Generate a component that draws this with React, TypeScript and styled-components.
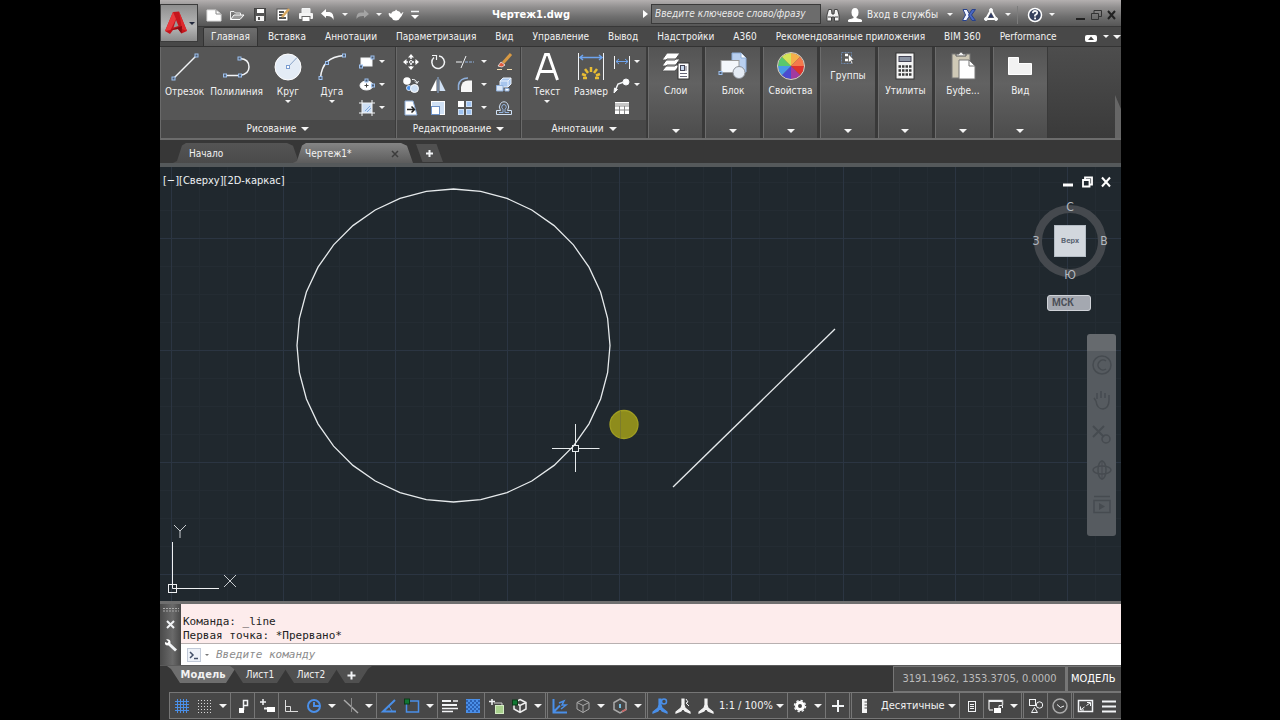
import React from 'react';
import styled, { createGlobalStyle, css } from 'styled-components';

const GlobalStyle = createGlobalStyle`
  *, *::before, *::after { box-sizing: border-box; }
  body {
    margin: 0;
    background: #000;
    color: #f2f2f2;
    font: 10px/14px "DejaVu Sans Condensed", "DejaVu Sans", sans-serif;
    overflow: hidden;
  }
  button, input, select {
    font: inherit;
    color: inherit;
    background: none;
    border: 0;
    padding: 0;
    margin: 0;
    border-radius: 0;
  }
  button { cursor: pointer; white-space: nowrap; }
  svg { display: block; flex: none; }
`;

/* ---------- shell ---------- */

const Page = styled.div`
  padding-left: 12.5%;
  background: #000;
`;

const Window = styled.div`
  display: flex;
  flex-direction: column;
  width: calc(75vw + 1px);
  height: 100vh;
  overflow: hidden;
  background: #373737;
`;

const Spacer = styled.div`
  flex: 1;
`;

const Caret = styled.span<{ $size?: number }>`
  flex: none;
  width: 0;
  height: 0;
  border: ${p => p.$size ?? 3}px solid transparent;
  border-top-color: #f4f4f4;
  border-bottom-width: 0;
`;

const CaretButton = styled.button<{ $w?: number }>`
  flex: none;
  display: flex;
  align-items: center;
  justify-content: center;
  width: ${p => p.$w ?? 12}px;
`;

/* ---------- header ---------- */

const Header = styled.header`
  flex: none;
  display: grid;
  grid-template-columns: 40px minmax(0, 1fr);
  height: 46px;
  background: linear-gradient(#b4b0b0 0, #929090 7px, #6e6e6e 17px, #565656 26px, #383838 26px, #383838 27px, #484848 27px);
`;

const AppButton = styled.button`
  display: flex;
  align-items: center;
  justify-content: center;
  gap: 1px;
  width: 38px;
  height: 38px;
  margin: 4px 0 0 0;
  border: 1px solid #3c3c3c;
  background: linear-gradient(#8e8e8e, #b8b8b8 60%, #8c8c8c);
  ${Caret} { border-top-color: #22283c; }
`;

const HeaderRows = styled.div`
  display: flex;
  flex-direction: column;
`;

const TitleBar = styled.div`
  display: flex;
  align-items: center;
  height: 27px;
`;

const ToolButton = styled.button<{ $w?: number }>`
  flex: none;
  display: flex;
  align-items: center;
  justify-content: center;
  width: ${p => p.$w ?? 23}px;
  height: 23px;
`;

const QuickTools = styled.div`
  display: flex;
  align-items: center;
  padding: 2px 0 0 2px;
`;

const DocTitle = styled.h1`
  flex: 1;
  margin: 0;
  padding: 3px 0 0 0;
  text-align: center;
  font-size: 11px;
  font-weight: bold;
  line-height: 14px;
  color: #fff;
`;

const Search = styled.input`
  flex: none;
  width: 170px;
  height: 20px;
  padding: 0 3px;
  border: 1px solid #3a3a3a;
  background: #6c6c6c;
  font-style: italic;
  &::placeholder { color: #eaeaea; opacity: 1; }
`;

const SignIn = styled.button`
  flex: none;
  display: flex;
  align-items: center;
  gap: 5px;
  width: 96px;
  padding-left: 4px;
`;

const VRule = styled.span`
  width: 1px;
  height: 18px;
  margin: 0 5px;
  background: #7c7c7c;
`;

const AccountTools = styled.div`
  flex: none;
  display: flex;
  align-items: center;
  width: 300px;
  padding: 2px 2px 0 0;
`;

const RibbonTabs = styled.nav`
  display: flex;
  align-items: stretch;
  gap: 1px;
  height: 19px;
  padding-left: 3px;
`;

const RibbonTab = styled.button<{ $active?: boolean }>`
  flex: none;
  padding: 1px 9px 0;
  ${p => p.$active && css`
    padding: 0 7px;
    border: 1px solid #333;
    border-bottom: 0;
    border-radius: 2px 2px 0 0;
    background: linear-gradient(#6e6e6e, #585858);
  `}
`;

/* ---------- ribbon ---------- */

const Ribbon = styled.section`
  flex: none;
  display: flex;
  height: 94px;
  border-top: 1px solid #333;
  border-bottom: 2px solid #6c6c6c;
  background: linear-gradient(#4d4d4d, #3a3a3a);
`;

const Panel = styled.div<{ $w: number }>`
  flex: none;
  display: flex;
  flex-direction: column;
  width: ${p => p.$w}px;
  border-left: 1px solid #6a6a6a;
  border-right: 1px solid #3c3c3c;
  background: #565656;
`;

const PanelBody = styled.div<{ $pad?: number }>`
  flex: 1;
  display: flex;
  padding: 3px 0 0 ${p => p.$pad ?? 1}px;
`;

const PanelLabel = styled.button`
  display: flex;
  align-items: center;
  justify-content: center;
  gap: 5px;
  height: 18px;
  background: #484848;
`;

const BigTool = styled.button`
  flex: none;
  display: flex;
  flex-direction: column;
  align-items: center;
  min-width: 44px;
  height: 58px;
  padding: 2px 3px 0;
  svg { margin-bottom: 3px; }
  ${Caret} { margin-top: 1px; }
`;

const SmallGrid = styled.div<{ $cols: string; $push?: boolean }>`
  display: grid;
  grid-template-columns: ${p => p.$cols};
  grid-auto-rows: 23px;
  align-content: start;
  margin: ${p => (p.$push ? '0 5px 0 auto' : '0')};
`;

const SmallTool = styled.span`
  display: flex;
  align-items: center;
`;

const SmallButton = styled.button<{ $w: number }>`
  flex: none;
  display: flex;
  justify-content: center;
  width: ${p => p.$w}px;
`;

const Collapsed = styled.div`
  flex: none;
  display: grid;
  grid-template-columns: repeat(7, 1fr);
  gap: 3px;
  width: 401px;
  padding: 0 1px;
  background: #393939;
`;

const CollapsedPanel = styled.button`
  display: flex;
  flex-direction: column;
  align-items: center;
  padding: 4px 0 5px;
  border-left: 1px solid #6c6c6c;
  background: linear-gradient(#545454, #626262 40%, #4c4c4c);
  span:last-child { margin-top: auto; }
`;

const CollapsedText = styled.span`
  padding-top: 3px;
`;

const RibbonEdge = styled.div`
  align-self: flex-end;
  width: 6px;
  height: 43px;
  background: #666;
  clip-path: polygon(0 0, 100% 14px, 100% 100%, 0 100%);
`;

/* ---------- document tabs ---------- */

const FileTabs = styled.nav`
  flex: none;
  display: flex;
  align-items: flex-end;
  height: 27px;
  padding: 0 0 0 13px;
  border-bottom: 4px solid #55595b;
`;

const FileTab = styled.button<{ $w: number; $active?: boolean }>`
  display: flex;
  align-items: center;
  justify-content: space-between;
  width: ${p => p.$w}px;
  height: 20px;
  margin-right: -6px;
  padding: 2px 14px 0 16px;
  background: ${p => (p.$active ? 'linear-gradient(#858585, #5c5c5c)' : 'linear-gradient(#545454, #4a4a4a)')};
  clip-path: polygon(0 100%, 4px 90%, 9px 12%, 13px 0, calc(100% - 12px) 0, calc(100% - 6px) 14%, 100% 100%);
  & + & { padding-left: 12px; }
`;

const NewFileTab = styled.button`
  display: flex;
  align-items: center;
  justify-content: center;
  width: 27px;
  height: 18px;
  margin: 0 0 1px 9px;
  background: #505050;
  clip-path: polygon(0 0, 76% 0, 100% 100%, 24% 100%);
`;

/* ---------- drawing area ---------- */

const Canvas = styled.main`
  position: relative;
  flex: 1;
  min-height: 0;
  overflow: hidden;
  background-color: #20282e;
  background-image:
    linear-gradient(90deg, #2b3542 1px, transparent 1px),
    linear-gradient(#2b3542 1px, transparent 1px),
    repeating-linear-gradient(90deg, #242c33 0 1px, transparent 1px 28px),
    repeating-linear-gradient(#242c33 0 1px, transparent 1px 28px);
  background-size: 112px 100%, 100% 112px, 112px 100%, 100% 112px;
  background-position: 11px 0, 0 71px, 11px 0, 0 71px;
`;

const Drawing = styled.svg`
  position: absolute;
  inset: 0;
  width: 100%;
  height: 100%;
`;

const ViewLabels = styled.div`
  position: absolute;
  top: 7px;
  left: 3px;
  display: flex;
  font-size: 11px;
  color: #eef1f3;
`;

const ViewControls = styled.div`
  position: absolute;
  top: 8px;
  right: 8px;
  display: flex;
  gap: 5px;
`;

const UcsIcon = styled.svg`
  position: absolute;
  left: 6px;
  bottom: 7px;
`;

const ViewCube = styled.div`
  position: absolute;
  top: 33px;
  right: 7px;
  display: grid;
  grid-template-columns: 20px 48px 20px;
  grid-template-rows: 14px 54px 14px;
  place-items: center;
  font-size: 12px;
  color: #b4bac0;
  &::before {
    content: "";
    position: absolute;
    top: 5px;
    left: 8px;
    width: 72px;
    height: 72px;
    border: 8px solid #45494e;
    border-radius: 50%;
  }
`;

const Compass = styled.button<{ $area: string }>`
  position: relative;
  grid-area: ${p => p.$area};
`;

const CubeFace = styled.button`
  grid-area: 2 / 2;
  position: relative;
  width: 32px;
  height: 32px;
  border: 1px solid #b4bcc4;
  background: #d2d7dd;
  color: #5b6673;
  font-family: Roboto, sans-serif;
  font-size: 8px;
  font-weight: bold;
`;

const UcsMenu = styled.button`
  position: absolute;
  top: 128px;
  right: 30px;
  width: 44px;
  height: 16px;
  padding: 0 4px;
  border: 1px solid #d0d3d8;
  border-radius: 3px;
  background: #a4a8b0;
  color: #4c5058;
  font-family: Roboto, sans-serif;
  font-weight: bold;
  line-height: 12px;
  text-align: left;
`;

const NavBar = styled.div`
  position: absolute;
  top: 167px;
  right: 5px;
  display: flex;
  flex-direction: column;
  align-items: center;
  gap: 13px;
  width: 29px;
  height: 202px;
  padding-top: 20px;
  border-radius: 3px;
  background: linear-gradient(#666a6e 0, #666a6e 17px, #565b60 17px);
`;

/* ---------- command line ---------- */

const CommandLine = styled.section`
  flex: none;
  display: grid;
  grid-template-columns: 21px minmax(0, 1fr);
  height: 64px;
  border-top: 3px solid #6f6f6f;
  font-family: "DejaVu Sans Mono", monospace;
  font-size: 11px;
`;

const Grip = styled.div`
  display: flex;
  flex-direction: column;
  align-items: center;
  gap: 8px;
  padding-top: 3px;
  background: linear-gradient(90deg, #4a4a4a, #6a6a6a 60%, #484848);
`;

const History = styled.pre`
  height: 40px;
  margin: 0;
  padding: 11px 2px 0;
  background: #fdecec;
  color: #222;
  font: inherit;
  line-height: 14px;
  border-bottom: 1px solid #b8b0b0;
`;

const Prompt = styled.label`
  display: flex;
  align-items: center;
  gap: 4px;
  height: 21px;
  padding-left: 6px;
  background: #fff;
  ${Caret} { border-top-color: #777; }
`;

const PromptInput = styled.input`
  flex: 1;
  padding-left: 3px;
  outline: 0;
  color: #333;
  font-style: italic;
  &::placeholder { color: #8c8c8c; opacity: 1; }
`;

/* ---------- bottom bars ---------- */

const LayoutRow = styled.div`
  flex: none;
  display: flex;
  height: 27px;
  padding-left: 7px;
  border-top: 1px solid #5a5a5a;
`;

const LayoutTab = styled.button<{ $w: number; $active?: boolean }>`
  flex: none;
  width: ${p => p.$w}px;
  height: 17px;
  margin-right: -9px;
  font-size: ${p => (p.$active ? 11 : 10)}px;
  font-weight: ${p => (p.$active ? 'bold' : 'normal')};
  background: ${p => (p.$active ? '#6e6e6e' : '#505050')};
  clip-path: polygon(0 0, 100% 0, calc(100% - 4px) 18%, calc(100% - 13px) 100%, 13px 100%, 4px 18%);
`;

const Readout = styled.button<{ $dim?: boolean }>`
  flex: none;
  width: 173px;
  height: 26px;
  padding: 0 6px;
  border: 1px solid #767676;
  background: #4a4a4a;
  color: ${p => (p.$dim ? '#bcbcbc' : '#fff')};
  font-size: 11px;
  & + & { width: 55px; padding: 0 0 0 3px; text-align: left; border-left-width: 2px; border-right: 0; }
`;

const StatusBar = styled.footer`
  flex: none;
  display: flex;
  align-items: stretch;
  height: 27px;
  margin: 0 0 1px 9px;
  border: 1px solid #767676;
  border-right: 0;
  background: #474747;
  font-size: 11px;
`;

const StatusButton = styled.button`
  flex: none;
  display: flex;
  align-items: center;
  justify-content: center;
  width: 23px;
`;

const Divider = styled.span<{ $double?: boolean }>`
  flex: none;
  width: ${p => (p.$double ? 3 : 1)}px;
  border: solid #767676;
  border-width: 0 ${p => (p.$double ? 1 : 0)}px 0 1px;
`;

const Picker = styled.select<{ $pad: number }>`
  flex: none;
  appearance: none;
  padding: 0 0 0 ${p => p.$pad}px;
  color: #f2f2f2;
`;

/* ---------- icons ---------- */

const BLUE = '#4a8fe8';
const PALE = '#cfe0f4';
const EDGE = '#8fb0dc';

type IconProps = { s?: number; w?: number; h?: number; children: React.ReactNode };
const Icon = ({ s = 18, w, h, children }: IconProps) => (
  <svg
    width={w ?? s}
    height={h ?? s}
    viewBox={`0 0 ${w ?? s} ${h ?? s}`}
    fill="none"
    stroke="#f2f4f6"
    strokeWidth={1}
    aria-hidden="true"
  >
    {children}
  </svg>
);

const Node = ({ x, y }: { x: number; y: number }) => (
  <rect x={x - 1.5} y={y - 1.5} width={3} height={3} fill="#4e5c70" stroke="#9cc0ee" />
);

const Logo = () => (
  <Icon w={24} h={26}>
    <path d="M9 2 L15 1.500 L23 21 L17.500 23.500 L14 19 L9 20 L6 24 L1 21Z" fill="#c4151c" stroke="none" />
    <path d="M9 2 L12 9 L6.500 20 L1 21Z" fill="#e8393c" stroke="none" />
    <path d="M12 10 L14.500 16 L9.500 17.500Z" fill="#9a9a9a" stroke="none" />
    <path d="M15 1.500 L23 21 L18 19Z" fill="#dd2a2e" stroke="none" />
    <path d="M6.500 20 L18 16 L17.500 23.500 L14 19Z" fill="#8c0c12" stroke="none" />
  </Icon>
);

const quick = {
  fresh: <Icon s={16}><path d="M1 3H10L15 7V14H1Z" fill="#fff" stroke="#ddd" /><path d="M10 3V7H15" stroke="#888" /></Icon>,
  open: <Icon s={16}><path d="M1.500 12.500V4.500H5L6.500 6H11.500V8" stroke="#eee" /><path d="M1.500 12.500L5 8H15L11 12.500Z" fill="#999" stroke="#fff" /></Icon>,
  save: <Icon s={16}><rect x="2.500" y="1.500" width="11" height="12" fill="#555" stroke="#444" /><rect x="5" y="2" width="7" height="4" fill="#fff" stroke="none" /><rect x="4" y="9" width="8" height="5" fill="#f4f4f4" stroke="none" /><rect x="6" y="10" width="2" height="3" fill="#555" stroke="none" /></Icon>,
  saveAs: <Icon s={16}><rect x="2" y="2" width="11" height="12" fill="#fff" stroke="#555" /><path d="M4 5H9M4 8H8M4 11H11" stroke="#555" strokeWidth="2" /><path d="M7 10L14 2" stroke="#d8a860" strokeWidth="2.500" /></Icon>,
  print: <Icon s={16}><path d="M4 6V1.500H12V6" fill="#eee" /><rect x="1" y="6" width="14" height="6" rx="1" fill="#f4f4f4" stroke="none" /><rect x="4" y="9.500" width="8" height="5" fill="#fff" stroke="#666" /></Icon>,
  undo: <Icon s={16}><path d="M1 6.500L6 2V5H9.500Q14 5.500 13.500 13Q12 8.500 6 9V11Z" fill="#fff" stroke="none" /></Icon>,
  redo: <Icon s={16}><path d="M15 7L10 2.500V5.500H6.500Q2 6 2.500 12Q4 8.500 10 9V11Z" fill="#a4a4a4" stroke="none" /></Icon>,
  teapot: <Icon s={16}><path d="M3 7Q4 4 7 4L8 2.500L9.500 4Q12 4 13 7Q14.500 5 15.500 5Q14 9 12 11Q11 13.500 8 13.500Q4.500 13.500 4 11Q1 10 .5 6.500Q2 5.500 3 7Z" fill="#fff" stroke="none" /></Icon>,
  more: <Icon s={16}><path d="M4 4.500H12" strokeWidth="1.500" /><path d="M4 8H12L8 12Z" fill="#fff" stroke="none" /></Icon>,
};

const account = {
  find: <Icon s={16}><path d="M2 14V8L3.500 2.500H6.500L7 7H9L9.500 2.500H12.500L14 8V14H9.500V10H6.500V14Z" fill="#f4f4f4" stroke="#444" /><path d="M3 10H6M10 10H13" stroke="#444" /></Icon>,
  user: <Icon w={14} h={14}><ellipse cx="7" cy="4.500" rx="3.500" ry="4.500" fill="#fff" stroke="none" /><path d="M6 8H8V10.500L13.500 12V13.500H.5V12L6 10.500Z" fill="#fff" stroke="#fff" /></Icon>,
  exchange: <Icon s={16}><path d="M2 2.500H6L9 8L5.500 13.500H1.500L4.500 8Z" fill="#f0f4ff" stroke="#27418c" /><path d="M14.500 2.500L10.500 8L14.500 13.500H11L7.500 8L11 2.500Z" fill="#4a68c4" stroke="#27418c" /></Icon>,
  a360: <Icon s={16}><path d="M8 3L13 12H3Z" stroke="#fff" strokeWidth="2" /><path d="M8 6L10.500 10.500H5.500Z" fill="#2c3a66" stroke="none" /><circle cx="8" cy="3" r="1.500" fill="#fff" /><circle cx="3" cy="12" r="1.500" fill="#fff" /><circle cx="13" cy="12" r="1.500" fill="#fff" /></Icon>,
  help: <Icon s={16}><circle cx="8" cy="8" r="6.500" fill="#34405c" stroke="#fff" strokeWidth="1.500" /><path d="M5.800 6.200Q6 4 8 4Q10.300 4 10.200 6Q10 7.300 8 8.300V9.500" strokeWidth="1.800" /><rect x="7.200" y="10.500" width="1.800" height="1.800" fill="#fff" stroke="none" /></Icon>,
};

const draw = {
  line: <Icon s={30}><path d="M3.500 26.500L26.500 3.500" strokeWidth="1.500" /><Node x={3.500} y={26.500} /><Node x={26.500} y={3.500} /></Icon>,
  poly: <Icon s={30}><path d="M3 23.500H18Q27 22 27 15Q27 7 18 6.500" strokeWidth="1.500" /><Node x={3} y={23.500} /><Node x={18} y={23.500} /><Node x={17.500} y={6.500} /></Icon>,
  circle: <Icon s={30}><circle cx="15" cy="15" r="13" fill="#e4ecf6" stroke="#fff" /><path d="M15 15L24 5.500" stroke="#8aa4c8" /><rect x="13.500" y="13.500" width="3" height="3" fill="#fff" stroke="#7a9cd0" /></Icon>,
  arc: <Icon s={30}><path d="M3.500 26Q5 5 27 3.500" strokeWidth="1.500" /><Node x={3.500} y={26} /><Node x={10} y={11} /><Node x={27} y={3.500} /></Icon>,
  rect: <Icon><rect x="3" y="5" width="11" height="8" fill="#fff" /><Node x={3} y={13.500} /><Node x={14.500} y={4.500} /></Icon>,
  ellipse: <Icon><ellipse cx="8.500" cy="9.500" rx="6.500" ry="4.500" fill="#fff" /><path d="M8.500 7.500V11.500M6.500 9.500H10.500" stroke="#444" /><Node x={8.500} y={4.500} /><Node x={15} y={9.500} /></Icon>,
  hatch: <Icon><rect x="4" y="4" width="10" height="10" fill={PALE} stroke="none" /><path d="M4 1V17M14 1V17M1 4H17M1 14H17" /><path d="M7 12L12 7M9 13L13 9" stroke="#7fa8de" /></Icon>,
};

const edit = {
  move: <Icon><path d="M9 1L12 4.500H6ZM9 17L6 13.500H12ZM1 9L4.500 6V12ZM17 9L13.500 12V6Z" fill="#fff" stroke="none" /><path d="M9 4V14M4 9H14" strokeWidth="1.500" strokeDasharray="2 1" /><circle cx="9" cy="9" r="1.500" fill="#565656" /></Icon>,
  rotate: <Icon><path d="M5 4.500A6.300 6.300 0 1 0 10 3" strokeWidth="1.500" /><path d="M3 2.500H7.500V7" strokeWidth="1.200" /></Icon>,
  trim: <Icon w={20} h={18}><path d="M1 9H7M6 15L11 3" /><path d="M10 9H19" stroke={EDGE} strokeDasharray="3 1" /></Icon>,
  erase: <Icon><path d="M8 10L16 1" stroke="#d89a44" strokeWidth="3" /><path d="M3 13L6 9L10 12L7 14Z" fill="#e05a3c" stroke="#fff" strokeWidth=".7" /><path d="M2 16.500H7M12 16.500H17" stroke="#f0dcb0" /></Icon>,
  copy: <Icon><circle cx="5" cy="5" r="3.800" fill="#fff" stroke="none" /><circle cx="7" cy="12" r="2.500" fill={BLUE} stroke={PALE} /><circle cx="12.500" cy="12.500" r="4" fill={PALE} stroke="#fff" /><path d="M10 3.500Q14 3 15 7M13 5.500L15 7.500L16.500 5" /></Icon>,
  mirror: <Icon><path d="M7.500 3V15H1.500Z" fill="#fff" stroke="none" /><path d="M10.500 3V15H16.500Z" fill={PALE} stroke="none" /><path d="M9 1V17" stroke={EDGE} /></Icon>,
  fillet: <Icon><path d="M5 16V11Q6 4.500 12 4.500H16V16Z" fill="#f6f6f6" stroke="none" /><path d="M2.500 14V9Q4 2 12 2" stroke={EDGE} strokeWidth="1.500" /></Icon>,
  explode: <Icon><path d="M5 5L8 2H16V8L13 11H5Z" fill="#a8c6ee" stroke="#eaf2fc" /><path d="M5 5H13V11M13 5L16 2" stroke="#eaf2fc" /><path d="M1.500 9.500H8V15H1.500Z" fill="#dbe8f8" stroke="#8fb0dc" /><path d="M10 12.500H14V15H10Z" fill="#fff" stroke="#8fb0dc" /></Icon>,
  stretch: <Icon><path d="M3 2H11L15 16H3Z" fill="#fff" stroke={EDGE} /><path d="M5 10.500H12M9.500 7.500L12.500 10.500L9.500 13.500" stroke="#222" strokeWidth="1.500" /></Icon>,
  scale: <Icon><rect x="2.500" y="2.500" width="13" height="13" fill={PALE} stroke="#fff" /><rect x="2.500" y="7.500" width="8" height="8" fill="#fff" stroke="#6f93c8" /></Icon>,
  array: <Icon><rect x="2" y="2" width="6" height="6" fill="#fff" stroke="none" /><rect x="10.500" y="2.500" width="5" height="5" fill="#9fc3f2" stroke={PALE} /><rect x="2.500" y="10.500" width="5" height="5" fill="#9fc3f2" stroke={PALE} /><rect x="10.500" y="10.500" width="5" height="5" fill="#9fc3f2" stroke={PALE} /></Icon>,
  offset: <Icon><path d="M1.500 15.500V11.500H5.500Q3 8 5.500 4.500Q9 1 12.500 4.500Q15 8 12.500 11.500H16.500V15.500Z" stroke={PALE} /><path d="M4 13.500H8V10.500Q5.500 8 7.500 6Q9 5 10.500 6Q12.500 8 10 10.500V13.500H14" stroke={EDGE} /></Icon>,
};

const notes = {
  text: <Icon s={30}><path d="M4.500 28L13.500 2.500H16.500L25.500 28M8 19.500H22" stroke="#fff" strokeWidth="3" /></Icon>,
  dim: <Icon s={30}><path d="M2.500 1V28M27.500 1V28" /><path d="M4 5.500H26M7 3L4 5.500L7 8M23 3L26 5.500L23 8" stroke="#6ea4ee" strokeWidth="1.500" /><path d="M15 15V20M9 17L12 21M21 17L18 21M6 22L10 23.500M24 22L20 23.500M7 26H11M19 26H23" stroke="#e8bc34" strokeWidth="2.500" /></Icon>,
  dimLinear: <Icon><path d="M1.500 3V16M16.500 3V16" /><path d="M3 8.500H15M6 6L3 8.500L6 11M12 6L15 8.500L12 11" stroke="#6ea4ee" /></Icon>,
  leader: <Icon><path d="M2 15L5 8L11 6" strokeWidth="1.500" /><path d="M1 17L1.500 12L4.500 13.500Z" fill="#fff" /><circle cx="13" cy="6" r="3" fill="#fff" /></Icon>,
  table: <Icon><rect x="2" y="3" width="14" height="12" fill="#fff" stroke="none" /><path d="M2 7H16M2 11H16M6.500 7V15M11.500 7V15" stroke="#888" /><path d="M2 5H16" stroke="#c8c8c8" strokeWidth="2" /></Icon>,
};

const wheel = ['#f6b04a', '#f57a4c', '#e0342c', '#a23aa0', '#4a4ad0', '#4a9ae6', '#59c86c', '#d4e458'];

const group = {
  layers: <Icon s={30}><path d="M6 2H19L14 9H1ZM6 8H19L14 15H1ZM6 14H19L14 20H1Z" fill="#fff" stroke="#555" /><rect x="17" y="12" width="11" height="16" fill="#fff" stroke="#333" /><rect x="19.500" y="14.500" width="4" height="5" fill="#c9d8ee" stroke="#445" /><path d="M19 22.500H26M19 25.500H26M25 15V20" stroke="#667" /></Icon>,
  block: <Icon s={30}><path d="M14 2H23L28 7V21H14Z" fill="#b9d0f0" stroke={EDGE} /><path d="M23 2V7H28" fill="#fff" stroke={EDGE} /><rect x="3" y="9.500" width="18" height="12" fill="#f4f7fb" stroke="#999" /><circle cx="21" cy="21.500" r="6" fill="#e4ebf4" stroke="#8a8f96" /><Node x={2.500} y={22} /></Icon>,
  props: (
    <Icon s={30}>
      {wheel.map((color, i) => {
        const a = (i * Math.PI) / 4 - Math.PI / 2;
        const b = a + Math.PI / 4;
        return (
          <path
            key={color}
            d={`M15 15L${15 + 13 * Math.cos(a)} ${15 + 13 * Math.sin(a)}A13 13 0 0 1 ${15 + 13 * Math.cos(b)} ${15 + 13 * Math.sin(b)}Z`}
            fill={color}
            stroke="none"
          />
        );
      })}
      <circle cx="15" cy="15" r="13.500" stroke="#d8d0c4" />
    </Icon>
  ),
  groups: <Icon s={15}><rect x="1.500" y="1.500" width="10" height="11" stroke="#6e88ac" strokeDasharray="2 1" /><path d="M5 4H8M5 9H8" stroke="#fff" strokeWidth="2.500" /><path d="M8.500 3L14 9H11.500L13 12.500L11.500 13L10.500 10L8.500 11.500Z" fill="#fff" stroke="#444" strokeWidth=".5" /></Icon>,
  utils: <Icon s={30}><rect x="6" y="2" width="18" height="26" fill="#f4f4f4" stroke="#333" /><rect x="9" y="5.500" width="12" height="5" fill="#8b93a2" stroke="#445" /><path d="M8.500 15.500H22M8.500 19.500H22M8.500 23.500H22" stroke="#3a3a3a" strokeWidth="2.500" strokeDasharray="2.500 1" /></Icon>,
  clip: <Icon s={30}><rect x="4" y="3" width="18" height="24" fill="#cfc9b6" stroke="#777" /><path d="M8 5V3H11Q11 1 13 1Q15 1 15 3H18V5Z" fill="#f2f2f2" stroke="#555" /><path d="M11 9H21L27 15V28H11Z" fill="#fff" stroke="#777" /><path d="M21 9V15H27" stroke="#777" /></Icon>,
  view: <Icon s={30}><path d="M3.500 6.500H13.500V12.500H26.500V23.500H3.500Z" fill="#f2f2f2" stroke="#fff" /></Icon>,
};

const Person = ({ color, extra }: { color: string; extra?: React.ReactNode }) => (
  <Icon s={18}>
    <path d="M8 2H10V8L11 11L16 15V16L11 14L9 11L7 14L2 16V15L7 11L8 8Z" fill={color} stroke={color} strokeWidth="1.200" />
    {extra}
  </Icon>
);

const Cube = ({ accent }: { accent?: boolean }) => (
  <Icon>
    <path d="M9 2.500L15 5.500V12L9 15.500L3 12V5.500ZM3 5.500L9 8.500L15 5.500M9 8.500V15.500" stroke={accent ? '#eee' : '#aaa'} strokeWidth={accent ? 1.500 : 1} />
    {accent && <rect x="1.500" y="3" width="5" height="5" fill="#173" stroke="#0c3a18" />}
  </Icon>
);

const status = {
  grid: <Icon><path d="M4.500 2V16M7.500 2V16M10.500 2V16M13.500 2V16M2 4.500H16M2 7.500H16M2 10.500H16M2 13.500H16" stroke={BLUE} /></Icon>,
  dots: <Icon><path d="M2 3.500H16M2 6.500H16M2 9.500H16M2 12.500H16M2 15.500H16" stroke="#d8d8d8" strokeDasharray="1 2" /></Icon>,
  infer: <Icon><path d="M9.500 13V3.500H13.500V8.500H9.500" strokeWidth="1.500" /><rect x="5" y="11" width="5" height="5" fill="#fff" stroke="none" /></Icon>,
  dynamic: <Icon><path d="M5 2V8M2 5H8" strokeWidth="1.500" /><path d="M6 11.500H9" strokeWidth="2" /><rect x="9" y="10" width="8" height="5" fill="#fff" stroke="none" /></Icon>,
  ortho: <Icon><path d="M3.500 3V14.500H16M3.500 9.500H8.500V14" stroke="#ddd" /></Icon>,
  polar: <Icon><circle cx="9" cy="9" r="6" stroke={BLUE} strokeWidth="2" /><path d="M9 9H15M9 5V10" stroke={BLUE} strokeWidth="2" /></Icon>,
  iso: <Icon><path d="M2 3L16 16" stroke="#aaa" strokeWidth="1.500" /><path d="M9.500 1V15" stroke="#888" /></Icon>,
  track: <Icon><path d="M15 3L3 14.500H16" stroke={BLUE} strokeWidth="2" /><path d="M9 9L12 14" stroke={BLUE} /></Icon>,
  snap: <Icon><rect x="3.500" y="4" width="12" height="11" stroke={BLUE} strokeWidth="1.500" /><rect x="1.500" y="2" width="5" height="5" fill="#173" stroke="#0c3a18" /></Icon>,
  weight: <Icon><path d="M1 4H10M1 8H16" strokeWidth="2" /><path d="M12 4H17M1 11.500H17M1 14.500H12" strokeWidth="1.500" /></Icon>,
  transparency: <Icon><rect x="2" y="2" width="14" height="14" fill={BLUE} stroke="none" /><path d="M2 4H16M2 8H16M2 12H16" stroke="#2c62b4" strokeWidth="2" strokeDasharray="2 2" /><path d="M4 6H16M4 10H16M4 14H16" stroke="#2c62b4" strokeWidth="2" strokeDasharray="2 2" /></Icon>,
  cycle: <Icon><path d="M1 4.500H7M4 2V8" strokeWidth="1.500" /><path d="M6 6H14V9" stroke="#ccc" /><rect x="7.500" y="8.500" width="8" height="8" fill="#a8d08d" stroke="#d4ecc4" /></Icon>,
  ucs: <Icon><path d="M2.500 2V15.500H16M2.500 15L9 8.500" stroke={BLUE} strokeWidth="2" /><path d="M8 6L13 4L11 8L15 8L10 12" stroke={BLUE} strokeWidth="1.500" /></Icon>,
  gizmo: <Icon><path d="M9 2L15 5.500V12.500L9 16L3 12.500V5.500Z" stroke="#aaa" strokeWidth="1.500" /><path d="M9 7V11" stroke="#7bd" strokeWidth="2" /><path d="M11 14.500L15 12.500" stroke="#c66" strokeWidth="1.500" /></Icon>,
  gear: <Icon><circle cx="9" cy="9" r="3.500" stroke="#fff" strokeWidth="3" /><circle cx="9" cy="9" r="5.500" strokeWidth="1.500" strokeDasharray="2.300 2" /></Icon>,
  plus: <Icon><path d="M9 3V15M3 9H15" strokeWidth="2" /></Icon>,
  ruler: <Icon><rect x="7" y="2" width="5" height="14" fill="#f4f4f4" stroke="none" /><path d="M9.500 5H12M9.500 8H12M9.500 11H12" stroke="#555" /></Icon>,
  quick: <Icon><rect x="5.500" y="4.500" width="7" height="10" /><path d="M7 7.500H11M7 9.500H11M7 11.500H11" /></Icon>,
  lock: <Icon><path d="M2 12.500V3.500H15.500V8M2 13H6" strokeWidth="1.500" stroke="#ccc" /><path d="M2 4H15" strokeWidth="2" /><rect x="7" y="11" width="7" height="5" fill="#fff" stroke="none" /><path d="M12 11V8.500H15.500V11" /></Icon>,
  isolate: <Icon><rect x="2.500" y="2.500" width="6" height="6" /><circle cx="12.500" cy="8" r="3.200" /><path d="M7.500 10.500L10.500 15.500H4.500Z" /></Icon>,
  hardware: <Icon><circle cx="9" cy="9" r="7" stroke="#aaa" strokeWidth="1.500" /><path d="M6 7.500L9.500 10.500L13 9" /></Icon>,
  clean: <Icon><rect x="1.500" y="3.500" width="14" height="11" strokeWidth="1.500" /><path d="M9.500 8.500L13 6M10 5.500H13.500V9M7.500 10L4 12.500M3.500 9.500V13H7" /></Icon>,
  menu: <Icon><path d="M2 4.500H16M2 9.500H16M2 14.500H16" strokeWidth="2" /></Icon>,
};

/* ---------- parts ---------- */

const circlePoints = Array.from({ length: 36 }, (_, i) => {
  const a = (i * 10 * Math.PI) / 180;
  return `${(293.5 + 156.5 * Math.cos(a)).toFixed(1)},${(178.5 + 156.5 * Math.sin(a)).toFixed(1)}`;
}).join(' ');

const ribbonTabs = [
  'Главная', 'Вставка', 'Аннотации', 'Параметризация', 'Вид', 'Управление',
  'Вывод', 'Надстройки', 'A360', 'Рекомендованные приложения', 'BIM 360', 'Performance',
];

const collapsed: [string, React.ReactNode][] = [
  ['Слои', group.layers],
  ['Блок', group.block],
  ['Свойства', group.props],
  ['Группы', group.groups],
  ['Утилиты', group.utils],
  ['Буфе...', group.clip],
  ['Вид', group.view],
];

const Small = ({ icon, label, menu, w = 18 }: { icon: React.ReactNode; label: string; menu?: boolean; w?: number }) => (
  <SmallTool>
    <SmallButton $w={w} aria-label={label}>{icon}</SmallButton>
    {menu && <CaretButton aria-label={`${label}: меню`} $w={12}><Caret $size={3} /></CaretButton>}
  </SmallTool>
);

const StatusMenu = () => <CaretButton aria-label="Меню" $w={14}><Caret $size={4} /></CaretButton>;

const S = ({ icon, label }: { icon: React.ReactNode; label: string }) => (
  <StatusButton aria-label={label}>{icon}</StatusButton>
);

export default function App() {
  return (
    <Page>
      <GlobalStyle />
      <Window>
        <Header>
          <AppButton aria-label="Меню приложения"><Logo /><Caret $size={3} /></AppButton>
          <HeaderRows>
            <TitleBar>
              <QuickTools>
                <ToolButton aria-label="Создать">{quick.fresh}</ToolButton>
                <ToolButton aria-label="Открыть">{quick.open}</ToolButton>
                <ToolButton aria-label="Сохранить">{quick.save}</ToolButton>
                <ToolButton aria-label="Сохранить как">{quick.saveAs}</ToolButton>
                <ToolButton aria-label="Печать">{quick.print}</ToolButton>
                <ToolButton $w={22} aria-label="Отменить">{quick.undo}</ToolButton>
                <CaretButton aria-label="История отмены"><Caret /></CaretButton>
                <ToolButton $w={22} aria-label="Повторить">{quick.redo}</ToolButton>
                <CaretButton aria-label="История повтора"><Caret /></CaretButton>
                <ToolButton $w={22} aria-label="Визуализация">{quick.teapot}</ToolButton>
                <ToolButton $w={16} aria-label="Настройка панели">{quick.more}</ToolButton>
              </QuickTools>
              <DocTitle>Чертеж1.dwg</DocTitle>
              <ToolButton $w={12} aria-label="Развернуть поиск">
                <Icon s={8}><path d="M2 0L7 4L2 8Z" fill="#fff" stroke="none" /></Icon>
              </ToolButton>
              <Search aria-label="Поиск" placeholder="Введите ключевое слово/фразу" />
              <AccountTools>
                <ToolButton aria-label="Найти">{account.find}</ToolButton>
                <SignIn>{account.user}Вход в службы</SignIn>
                <CaretButton $w={20} aria-label="Учетная запись"><Caret /></CaretButton>
                <ToolButton $w={18} aria-label="Exchange">{account.exchange}</ToolButton>
                <ToolButton $w={26} aria-label="A360">{account.a360}</ToolButton>
                <CaretButton $w={8} aria-label="Меню A360"><Caret /></CaretButton>
                <VRule />
                <ToolButton aria-label="Справка">{account.help}</ToolButton>
                <CaretButton aria-label="Меню справки"><Caret /></CaretButton>
                <Spacer />
                <ToolButton $w={46} aria-label="Окно">
                  <Icon w={44} h={14}>
                    <path d="M2 11H11" stroke="#222" strokeWidth="2" />
                    <path d="M17.500 5.500H24.500V11.500H17.500ZM20 5V2.500H27.500V8.500H25" stroke="#333" />
                    <path d="M34 3L41 11M41 3L34 11" stroke="#222" strokeWidth="2" />
                  </Icon>
                </ToolButton>
              </AccountTools>
            </TitleBar>
            <RibbonTabs>
              {ribbonTabs.map((t, i) => <RibbonTab key={t} $active={i === 0}>{t}</RibbonTab>)}
              <Spacer />
              <ToolButton $w={16} aria-label="Свернуть ленту">
                <Icon w={14} h={18}><rect x="1" y="5" width="12" height="7" rx="2" fill="#fff" stroke="none" /><path d="M7 6.500L10 10H4Z" fill="#444" stroke="none" /></Icon>
              </ToolButton>
              <CaretButton aria-label="Параметры ленты"><Caret /></CaretButton>
              <CaretButton $w={8} aria-label="Еще"><Caret $size={4} /></CaretButton>
            </RibbonTabs>
          </HeaderRows>
        </Header>

        <Ribbon>
          <Panel $w={236}>
            <PanelBody>
              <BigTool>{draw.line}Отрезок</BigTool>
              <BigTool>{draw.poly}Полилиния</BigTool>
              <BigTool>{draw.circle}Круг<Caret /></BigTool>
              <BigTool>{draw.arc}Дуга<Caret /></BigTool>
              <SmallGrid $cols="32px" $push>
                <Small icon={draw.rect} label="Прямоугольник" menu />
                <Small icon={draw.ellipse} label="Эллипс" menu />
                <Small icon={draw.hatch} label="Штриховка" menu />
              </SmallGrid>
            </PanelBody>
            <PanelLabel>Рисование<Caret $size={4} /></PanelLabel>
          </Panel>
          <Panel $w={125}>
            <PanelBody $pad={0}>
              <SmallGrid $cols="27px 27px 39px 27px">
                <Small w={27} icon={edit.move} label="Перенести" />
                <Small w={27} icon={edit.rotate} label="Повернуть" />
                <Small w={27} icon={edit.trim} label="Обрезать" menu />
                <Small w={27} icon={edit.erase} label="Стереть" />
                <Small w={27} icon={edit.copy} label="Копировать" />
                <Small w={27} icon={edit.mirror} label="Зеркало" />
                <Small w={27} icon={edit.fillet} label="Сопряжение" menu />
                <Small w={27} icon={edit.explode} label="Расчленить" />
                <Small w={27} icon={edit.stretch} label="Растянуть" />
                <Small w={27} icon={edit.scale} label="Масштаб" />
                <Small w={27} icon={edit.array} label="Массив" menu />
                <Small w={27} icon={edit.offset} label="Подобие" />
              </SmallGrid>
            </PanelBody>
            <PanelLabel>Редактирование<Caret $size={4} /></PanelLabel>
          </Panel>
          <Panel $w={126}>
            <PanelBody $pad={3}>
              <BigTool>{notes.text}Текст<Caret /></BigTool>
              <BigTool>{notes.dim}Размер</BigTool>
              <SmallGrid $cols="30px">
                <Small icon={notes.dimLinear} label="Линейный" menu />
                <Small icon={notes.leader} label="Выноска" menu />
                <Small icon={notes.table} label="Таблица" />
              </SmallGrid>
            </PanelBody>
            <PanelLabel>Аннотации<Caret $size={4} /></PanelLabel>
          </Panel>
          <Collapsed>
            {collapsed.map(([name, icon]) => (
              <CollapsedPanel key={name}>
                {icon}
                <CollapsedText>{name}</CollapsedText>
                <Caret $size={4} />
              </CollapsedPanel>
            ))}
          </Collapsed>
          <Spacer />
          <RibbonEdge />
        </Ribbon>

        <FileTabs>
          <FileTab $w={126}>Начало</FileTab>
          <FileTab $w={120} $active>
            Чертеж1*
            <Icon s={8}><path d="M1 1L7 7M7 1L1 7" stroke="#3c3c3c" strokeWidth="1.500" /></Icon>
          </FileTab>
          <NewFileTab aria-label="Новая вкладка">
            <Icon s={9}><path d="M4.500 1V8M1 4.500H8" strokeWidth="2" /></Icon>
          </NewFileTab>
        </FileTabs>

        <Canvas>
          <Drawing fill="none" stroke="#e6eaec" strokeWidth={1.3} aria-label="Чертеж">
            <polygon points={circlePoints} />
            <path d="M513 320L675 162" />
            <circle cx="464" cy="257.500" r="14" fill="#8e8c1c" stroke="#a09e22" />
            <path d="M460.500 244V271" stroke="#7c7c2c" strokeWidth="1" />
            <path d="M392 281.500H412.500M418.500 281.500H439.500M415.500 257V278.500M415.500 284.500V305" strokeWidth="1" />
            <rect x="412.500" y="278.500" width="6" height="6" strokeWidth="1" />
          </Drawing>
          <ViewLabels>
            <button>[−]</button>
            <button>[Сверху]</button>
            <button>[2D-каркас]</button>
          </ViewLabels>
          <ViewControls>
            <button aria-label="Свернуть"><Icon s={14}><path d="M2 10H12" stroke="#fff" strokeWidth="3" /></Icon></button>
            <button aria-label="Восстановить"><Icon s={14}><path d="M3 5H9.500V11.500H3ZM5 4V2.500H12V9.500H10" stroke="#fff" strokeWidth="1.800" /></Icon></button>
            <button aria-label="Закрыть"><Icon s={14}><path d="M3 2.500L11 11.500M11 2.500L3 11.500" stroke="#fff" strokeWidth="2" /></Icon></button>
          </ViewControls>
          <ViewCube>
            <Compass $area="1 / 2">С</Compass>
            <Compass $area="2 / 1">З</Compass>
            <CubeFace>Верх</CubeFace>
            <Compass $area="2 / 3">В</Compass>
            <Compass $area="3 / 2">Ю</Compass>
          </ViewCube>
          <UcsMenu>МСК</UcsMenu>
          <NavBar>
            <Icon s={22}><circle cx="11" cy="11" r="9" stroke="#464b50" strokeWidth="1.500" /><path d="M15 7A5 5 0 1 0 15 15" stroke="#464b50" strokeWidth="1.500" /></Icon>
            <Icon s={22}><path d="M5 12L3 9M6 10V4M10 9V2M14 9V4M18 11V6M5 12Q6 20 12 20Q18 19 18 11" stroke="#464b50" strokeWidth="1.500" /></Icon>
            <Icon s={22}><path d="M2 2L13 13M13 2L2 13" stroke="#464b50" strokeWidth="2" /><circle cx="15" cy="15" r="4" stroke="#464b50" strokeWidth="1.500" /></Icon>
            <Icon s={22}><ellipse cx="11" cy="11" rx="9" ry="4" stroke="#464b50" strokeWidth="1.500" /><ellipse cx="11" cy="11" rx="4" ry="9" stroke="#464b50" strokeWidth="1.500" /><path d="M11 1V21" stroke="#464b50" /></Icon>
            <Icon s={22}><path d="M3 2.500H19M3 6.500H19V18.500H3Z" stroke="#464b50" strokeWidth="1.500" /><path d="M8 9L14 12.500L8 16Z" fill="#464b50" stroke="none" /></Icon>
          </NavBar>
          <UcsIcon width="72" height="72" viewBox="0 0 72 72" fill="none" stroke="#eef0f2" aria-hidden="true">
            <path d="M6.500 20V62M11 66.500H53" />
            <rect x="2.500" y="62.500" width="8" height="8" />
            <path d="M6.500 62V66.500H11" />
            <path d="M8 3L14 9L20 3M14 9V16M58 53L70 65M70 53L58 65" stroke="#c8ccd0" />
          </UcsIcon>
        </Canvas>

        <CommandLine>
          <Grip>
            <Icon w={18} h={5}><path d="M1 1.500H17M1 4H17" stroke="#aaa" strokeDasharray="2 1" /></Icon>
            <button aria-label="Закрыть командную строку">
              <Icon s={9}><path d="M1 1L8 8M8 1L1 8" strokeWidth="2" /></Icon>
            </button>
            <button aria-label="Адаптация">
              <Icon s={16}><path d="M6 7L13 13.500" strokeWidth="3" /><path d="M3 2.500Q7 1.500 7.500 5Q7.500 8.500 4 8.500Q1.500 8 2 5L4.500 6L5.500 4.500Z" fill="#fff" stroke="none" /></Icon>
            </button>
          </Grip>
          <div>
            <History>{'Команда: _line\nПервая точка: *Прервано*'}</History>
            <Prompt>
              <Icon s={14}><rect x=".5" y=".5" width="13" height="13" fill="#eef2f8" stroke="#c2cad8" /><path d="M3 4L6 7L3 10M7 10.500H11" stroke="#445068" strokeWidth="1.500" /></Icon>
              <Caret $size={2} />
              <PromptInput aria-label="Командная строка" placeholder="Введите команду" />
            </Prompt>
          </div>
        </CommandLine>

        <LayoutRow>
          <LayoutTab $w={72} $active>Модель</LayoutTab>
          <LayoutTab $w={60}>Лист1</LayoutTab>
          <LayoutTab $w={60}>Лист2</LayoutTab>
          <LayoutTab $w={40} aria-label="Новый лист">
            <Icon w={40} h={16}><path d="M19.500 4.500V12.500M15.500 8.500H23.500" strokeWidth="2" /></Icon>
          </LayoutTab>
          <Spacer />
          <Readout $dim>3191.1962, 1353.3705, 0.0000</Readout>
          <Readout>МОДЕЛЬ</Readout>
        </LayoutRow>

        <StatusBar>
          <S icon={status.grid} label="Сетка" />
          <S icon={status.dots} label="Шаг" />
          <StatusMenu />
          <Divider />
          <S icon={status.infer} label="Зависимости" />
          <Divider />
          <S icon={status.dynamic} label="Динамический ввод" />
          <Divider />
          <S icon={status.ortho} label="Орто" />
          <S icon={status.polar} label="Полярное отслеживание" />
          <StatusMenu />
          <S icon={status.iso} label="Изометрия" />
          <StatusMenu />
          <Divider />
          <S icon={status.track} label="Отслеживание" />
          <S icon={status.snap} label="Привязка" />
          <StatusMenu />
          <Divider />
          <S icon={status.weight} label="Вес линий" />
          <S icon={status.transparency} label="Прозрачность" />
          <Divider />
          <S icon={status.cycle} label="Циклический выбор" />
          <S icon={<Cube accent />} label="3D привязка" />
          <StatusMenu />
          <Divider $double />
          <S icon={status.ucs} label="Динамическая ПСК" />
          <S icon={<Cube />} label="Фильтр выбора" />
          <StatusMenu />
          <S icon={status.gizmo} label="Гизмо" />
          <StatusMenu />
          <Divider $double />
          <S icon={<Person color={BLUE} extra={<circle cx="13" cy="4.500" r="2.500" stroke={BLUE} strokeWidth="1.500" />} />} label="Показывать аннотации" />
          <S icon={<Person color="#f2f2f2" extra={<path d="M12 2L14 5L12 6L15 9" />} />} label="Автомасштаб" />
          <S icon={<Person color="#f2f2f2" />} label="Масштаб аннотаций" />
          <Picker $pad={2} aria-label="Масштаб" defaultValue="1"><option value="1">1:1 / 100%</option></Picker>
          <StatusMenu />
          <Divider />
          <S icon={status.gear} label="Рабочее пространство" />
          <StatusMenu />
          <Divider />
          <S icon={status.plus} label="Монитор аннотаций" />
          <Divider $double />
          <S icon={status.ruler} label="Единицы" />
          <Picker $pad={6} aria-label="Единицы" defaultValue="d"><option value="d">Десятичные</option></Picker>
          <StatusMenu />
          <Divider />
          <S icon={status.quick} label="Быстрые свойства" />
          <Divider />
          <S icon={status.lock} label="Блокировка интерфейса" />
          <StatusMenu />
          <Divider $double />
          <S icon={status.isolate} label="Изоляция объектов" />
          <Divider />
          <S icon={status.hardware} label="Аппаратное ускорение" />
          <Divider $double />
          <S icon={status.clean} label="Очистить экран" />
          <S icon={status.menu} label="Адаптация" />
        </StatusBar>
      </Window>
    </Page>
  );
}
